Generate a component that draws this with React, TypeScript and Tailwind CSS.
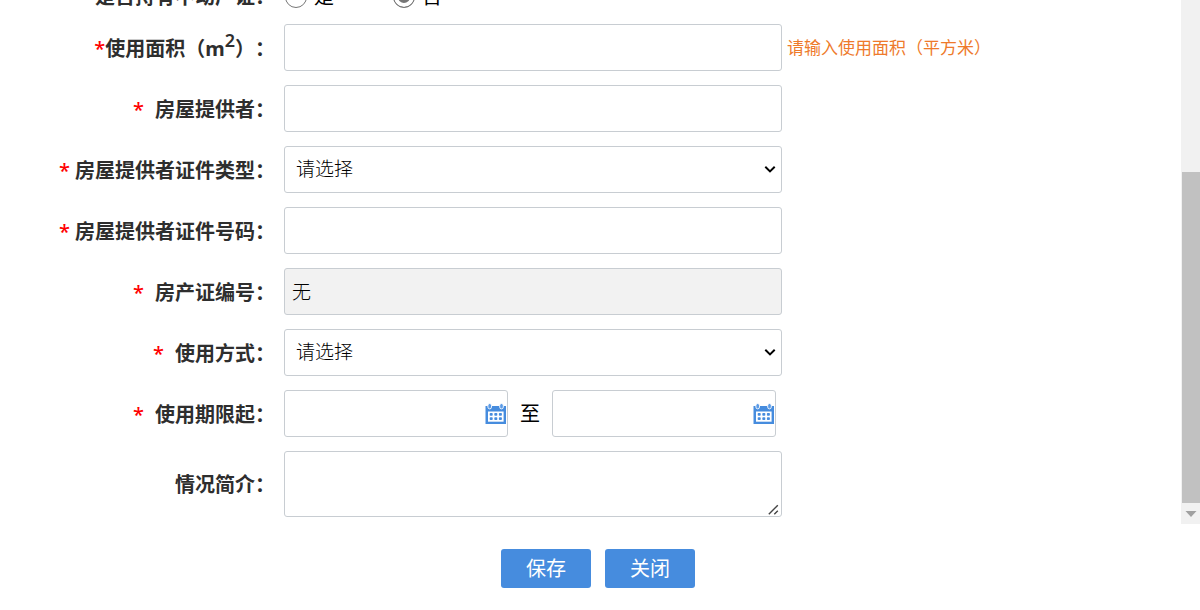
import { useState } from 'react'
import type { ReactNode } from 'react'

const BOX = 'h-[47px] w-full rounded-[3px] border border-[#c8cdd2] text-[19px] font-light text-black outline-none focus:border-[#468cde]'

interface RowProps {
  label: ReactNode
  htmlFor?: string
  star?: 'none' | 'tight' | 'near' | 'wide'
  hint?: string
  children: ReactNode
}

const starGap = {
  none: '',
  tight: '',
  near: 'mr-[5px]',
  wide: 'mr-[11px]',
}

function Row({ label, htmlFor, star = 'none', hint, children }: RowProps) {
  return (
    <div className="flex items-center gap-[9px]">
      <label
        htmlFor={htmlFor}
        className="w-[275px] shrink-0 pt-[2px] whitespace-nowrap text-right text-[20px] leading-[26px] font-bold text-[#2e2e2e] [text-spacing-trim:space-all]"
      >
        {star !== 'none' && <span className={`font-medium text-[#ff0000] ${starGap[star]}`}>*</span>}
        {label}
      </label>
      <div className="min-w-0 max-w-[498px] flex-1">{children}</div>
      {hint && <span className="-ml-1 shrink-0 text-[17px] leading-[26px] text-[#ee7a2b]">{hint}</span>}
    </div>
  )
}

function SelectBox({ id, options }: { id: string; options: string[] }) {
  return (
    <div className="relative">
      <select id={id} className={`${BOX} appearance-none bg-white pl-[11px] pr-8`}>
        <option value="">请选择</option>
        {options.map((o) => (
          <option key={o}>{o}</option>
        ))}
      </select>
      <svg className="pointer-events-none absolute top-[19px] right-[6px]" width="12" height="9" viewBox="0 0 12 9" fill="none">
        <path d="M1.3 1.8 6 6.4l4.7-4.6" stroke="#000" strokeWidth="2" />
      </svg>
    </div>
  )
}

function CalendarIcon() {
  return (
    <svg width="22" height="22" viewBox="0 0 22 22">
      <path d="M0.5 3h20.5v18H0.5z" fill="#468cde" />
      <path d="M3 8.5h15.6v10.2H3z" fill="#fff" />
      {[4.6, 16.4].map((x) => (
        <rect key={x} x={x - 1.7} y="0.5" width="3.6" height="5.4" rx="1.8" fill="#5c9be6" stroke="#fff" strokeWidth="0.9" />
      ))}
      {[10, 14.3].map((y) =>
        [4.7, 9.3, 13.9].map((x) => (
          <rect key={`${x}-${y}`} x={x} y={y} width="3" height="2.8" rx="0.8" fill="#468cde" />
        ))
      )}
    </svg>
  )
}

function DateBox({ id, label }: { id: string; label: string }) {
  return (
    <div className="relative w-[224px]">
      <input id={id} type="text" aria-label={label} className={`${BOX} block bg-white pl-[7px] pr-7`} />
      <button type="button" aria-label="选择日期" className="absolute top-[13px] right-px">
        <CalendarIcon />
      </button>
    </div>
  )
}

function Radio({ label, checked, onChange }: { label: string; checked: boolean; onChange: () => void }) {
  return (
    <label className="flex items-center gap-[7px] text-[20px] leading-[26px] text-black">
      <input
        type="radio"
        name="hasCert"
        checked={checked}
        onChange={onChange}
        className="size-[22px] appearance-none rounded-full border border-[#767676] bg-white checked:bg-[#767676] checked:shadow-[inset_0_0_0_4px_#fff]"
      />
      {label}
    </label>
  )
}

function ScrollBar() {
  return (
    <div className="flex w-[19px] shrink-0 flex-col bg-[#f1f1f1] pt-[172px] pl-px">
      <div className="flex-1 bg-[#c1c1c1]" />
      <div className="flex h-[21px] items-center justify-center">
        <svg width="12" height="6" viewBox="0 0 12 6">
          <path d="M0.5 0h11L6 6z" fill="#a0a0a0" />
        </svg>
      </div>
    </div>
  )
}

export default function App() {
  const [hasCert, setHasCert] = useState(false)

  return (
    <div className="flex h-screen flex-col bg-white font-['Noto_Sans','Noto_Sans_CJK_SC',sans-serif]">
      <div className="flex min-h-0 flex-1">
        {/* scrolled to the end, so the first row is cut off at the top */}
        <form className="flex min-w-0 flex-1 flex-col justify-end gap-[14px] overflow-hidden pb-[7px]">
          <Row label="是否持有不动产证：">
            <div className="flex gap-[59px] pt-[2px] pl-px">
              <Radio label="是" checked={hasCert} onChange={() => setHasCert(true)} />
              <Radio label="否" checked={!hasCert} onChange={() => setHasCert(false)} />
            </div>
          </Row>
          <Row
            htmlFor="area"
            star="tight"
            hint="请输入使用面积（平方米）"
            label={<>使用面积（m<sup className="text-[18px] font-semibold">2</sup>）：</>}
          >
            <input id="area" type="text" className={`${BOX} block bg-white px-[7px]`} />
          </Row>
          <Row htmlFor="provider" star="wide" label="房屋提供者：">
            <input id="provider" type="text" className={`${BOX} block bg-white px-[7px]`} />
          </Row>
          <Row htmlFor="idType" star="near" label="房屋提供者证件类型：">
            <SelectBox id="idType" options={['居民身份证', '护照', '营业执照']} />
          </Row>
          <Row htmlFor="idNo" star="near" label="房屋提供者证件号码：">
            <input id="idNo" type="text" className={`${BOX} block bg-white px-[7px]`} />
          </Row>
          <Row htmlFor="certNo" star="wide" label="房产证编号：">
            <input id="certNo" type="text" readOnly value="无" className={`${BOX} block bg-[#f2f2f2] px-[7px] pb-[2px]`} />
          </Row>
          <Row htmlFor="useMode" star="wide" label="使用方式：">
            <SelectBox id="useMode" options={['自有', '租赁', '无偿使用']} />
          </Row>
          <Row htmlFor="dateFrom" star="wide" label="使用期限起：">
            <div className="flex items-center gap-3 text-[20px] text-black">
              <DateBox id="dateFrom" label="使用期限起" />
              <span>至</span>
              <DateBox id="dateTo" label="使用期限止" />
            </div>
          </Row>
          <Row htmlFor="intro" label="情况简介：">
            <div className="relative">
              <textarea
                id="intro"
                className="block h-[66px] w-full resize-none rounded-[3px] border border-[#c8cdd2] bg-white px-[7px] py-1 text-[19px] outline-none focus:border-[#468cde]"
              />
              <svg className="pointer-events-none absolute right-[3px] bottom-[2px]" width="11" height="11" viewBox="0 0 11 11">
                <path d="M0.8 10.2 9.8 1.2M6.3 10.2 9.8 6.7" stroke="#444" strokeWidth="1.4" fill="none" />
              </svg>
            </div>
          </Row>
        </form>
        <ScrollBar />
      </div>

      <div className="flex shrink-0 justify-center gap-[14px] pt-[25px] pr-1 pb-[22px]">
        <button type="button" className="h-[39px] w-[90px] rounded-[3px] bg-[#468cde] text-[20px] text-white">
          保存
        </button>
        <button type="button" className="h-[39px] w-[90px] rounded-[3px] bg-[#468cde] text-[20px] text-white">
          关闭
        </button>
      </div>
    </div>
  )
}
